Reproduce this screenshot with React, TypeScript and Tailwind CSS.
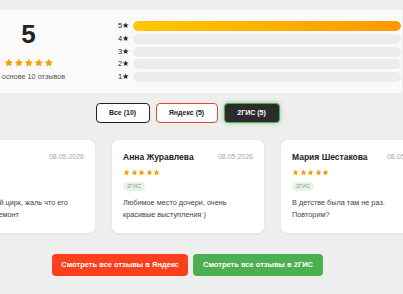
import React from "react";

interface Review {
  id: number;
  name: string;
  date: string;
  text: string[];
}

const reviews: Review[] = [
  { id: 1, name: "Елена", date: "08.05.2026", text: ["Наш любимый цирк, жаль что его", "закрыли на ремонт"] },
  { id: 2, name: "Анна Журавлева", date: "08.05.2026", text: ["Любимое место дочери, очень", "красивые выступления )"] },
  { id: 3, name: "Мария Шестакова", date: "08.05.2026", text: ["В детстве была там не раз.", "Повторим?"] },
];

const distribution = [
  { stars: 5, pct: 100 },
  { stars: 4, pct: 0 },
  { stars: 3, pct: 0 },
  { stars: 2, pct: 0 },
  { stars: 1, pct: 0 },
];

function Star({ size }: { size: number }) {
  return (
    <svg width={size} height={size} viewBox="0 0 24 24" fill="#f5a000">
      <path d="M12 1.8l3.1 6.5 7.1.9-5.2 4.9 1.3 7.1L12 17.8l-6.3 3.4 1.3-7.1L1.8 9.2l7.1-.9z" />
    </svg>
  );
}

function Stars({ size, gap }: { size: number; gap: string }) {
  return (
    <div className={`flex ${gap}`}>
      {[0, 1, 2, 3, 4].map((i) => (
        <Star key={i} size={size} />
      ))}
    </div>
  );
}

function ReviewCard({ review }: { review: Review }) {
  return (
    <div className="w-[152px] h-[93px] shrink-0 bg-white rounded-[7px] px-[11px] pt-[11px] shadow-[0_1px_3px_rgba(0,0,0,0.06)]">
      <div className="flex justify-between items-start">
        <span className="text-[8.5px] font-bold leading-[12px] text-[#222]">{review.name}</span>
        <span className="text-[7px] leading-[11px] text-[#a8a8a8]">{review.date}</span>
      </div>
      <div className="mt-[6px]">
        <Stars size={7} gap="gap-[0.6px]" />
      </div>
      <div className="mt-[6px] flex">
        <span className="h-[9px] px-[4px] rounded-full bg-[#e6f4e8] text-[5.5px] leading-[9px] text-[#86a58c]">
          2ГИС
        </span>
      </div>
      <div className="mt-[6px] text-[7.3px] leading-[12px] text-[#444]">
        {review.text.map((line, i) => (
          <p key={i} className="whitespace-nowrap">{line}</p>
        ))}
      </div>
    </div>
  );
}

export default function App() {
  return (
    <div
      className="w-[403px] h-[294px] overflow-hidden bg-[#eeeeee]"
      style={{ fontFamily: '"Liberation Sans", Arial, sans-serif' }}
    >
      {/* Summary */}
      <div className="pt-[10px]">
        <div className="ml-[-40px] w-[442px] h-[83px] bg-[#fafafa] flex items-center">
          <div className="w-[137px] shrink-0 flex flex-col items-center">
            <div className="text-[26px] font-bold leading-[26px] text-[#222]">5</div>
            <div className="mt-[11px] flex">
              <Stars size={9.6} gap="gap-[0.4px]" />
            </div>
            <div className="mt-[5px] text-[7.3px] leading-[10px] text-[#555] whitespace-nowrap">
              на основе 10 отзывов
            </div>
          </div>
          <div className="ml-[21px] flex-1 flex flex-col gap-[2.75px] pr-[1px]">
            {distribution.map((row) => (
              <div key={row.stars} className="flex items-center gap-[3px] h-[10px]">
                <span className="w-[12px] text-[7.5px] leading-[10px] text-[#222] whitespace-nowrap">
                  {row.stars}★
                </span>
                <div className="flex-1 h-[10px] rounded-full bg-[#ececec] overflow-hidden">
                  <div
                    className="h-full rounded-full bg-gradient-to-r from-[#ffc800] to-[#ff9800]"
                    style={{ width: `${row.pct}%` }}
                  />
                </div>
              </div>
            ))}
          </div>
        </div>
      </div>

      {/* Filters */}
      <div className="w-[375px] mt-[10px] flex justify-center gap-[6px]">
        <button className="w-[54px] h-[20px] rounded-[4px] border border-[#222] bg-white text-[7px] font-bold text-[#222]">
          Все (10)
        </button>
        <button className="w-[62px] h-[20px] rounded-[4px] border border-[#e0492d] bg-white text-[7px] font-bold text-[#222]">
          Яндекс (5)
        </button>
        <button className="w-[56px] h-[20px] rounded-[4px] border-[1.5px] border-[#4caf50] bg-[#2b2b2b] text-[7px] font-bold text-white shadow-[0_0_4px_rgba(76,175,80,0.6)]">
          2ГИС (5)
        </button>
      </div>

      {/* Reviews */}
      <div className="mt-[17px] ml-[-57px] flex gap-[17px]">
        {reviews.map((r) => (
          <ReviewCard key={r.id} review={r} />
        ))}
      </div>

      {/* Links */}
      <div className="w-[375px] mt-[21px] flex justify-center gap-[5px]">
        <button className="w-[136px] h-[22px] rounded-[4px] bg-[#fc3f1d] text-[7.5px] font-bold text-white">
          Смотреть все отзывы в Яндекс
        </button>
        <button className="w-[130px] h-[22px] rounded-[4px] bg-[#4caf50] text-[7.5px] font-bold text-white">
          Смотреть все отзывы в 2ГИС
        </button>
      </div>
    </div>
  );
}
